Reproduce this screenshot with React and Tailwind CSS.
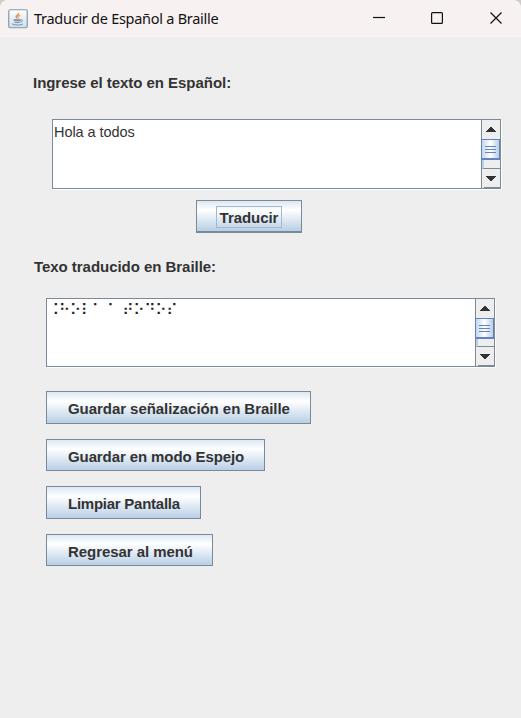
import React from "react";

function JavaIcon() {
  return (
    <svg width="20" height="20" viewBox="0 0 20 20" className="block">
      <defs>
        <linearGradient id="tile" x1="0" y1="0" x2="0" y2="1">
          <stop offset="0" stopColor="#ffffff" />
          <stop offset="1" stopColor="#d3dde6" />
        </linearGradient>
      </defs>
      <rect x="0.75" y="0.75" width="18.5" height="18" rx="1.5" fill="url(#tile)" stroke="#8299ad" strokeWidth="1.2" />
      <path d="M10.6 3.2C11 5.2 7 6 7.500 8c.2.9 1.2 1.300 1.500 2.200C9.700 8.500 8.800 8 10.200 6.800 11.300 5.900 11.700 4.800 10.600 3.200Z" fill="#ee8a3a" />
      <path d="M12.400 6.300C9.800 7 9.800 8.200 10.400 9.800" fill="none" stroke="#f0a465" strokeWidth="1.200" />
      <path d="M5.500 10.300h7.300c0 .8-.1 1.200-.3 1.700H5.800c-.2-.5-.3-1-.3-1.700ZM6.200 12.700h6c-.3.900-.7 1.300-1.200 1.300H7.500c-.6 0-1-.5-1.300-1.300Z" fill="#6f93b0" />
      <path d="M12.800 10.800c2.500-.7 2.200 1.900-.6 2.200M4 14.700c2 1.800 9.500 1.600 10.800.2" fill="none" stroke="#6f93b0" strokeWidth="1" />
    </svg>
  );
}

function TitleBar() {
  return (
    <header className="flex h-[37px] items-center bg-[#f7f1f1] pl-2">
      <JavaIcon />
      <h1 className="mb-[2px] ml-[6px] w-[200px] whitespace-nowrap font-['Noto_Sans',sans-serif] text-[14.5px] leading-5 tracking-[-0.27px] text-[#111]">
        Traducir de Español a Braille
      </h1>
      <svg className="ml-auto block" width="161" height="37" viewBox="360 0 161 37" fill="none" stroke="#111" strokeWidth="1.200">
        <path d="M373 17.500h12" />
        <rect x="431.600" y="12.600" width="10.800" height="10.800" rx="1" />
        <path d="M490.500 12.500l11 11M501.500 12.500l-11 11" />
      </svg>
    </header>
  );
}

function ArrowButton({ className, down }) {
  return (
    <div className={`flex shrink-0 items-center justify-center bg-[#eeeeee] pr-px ${className}`}>
      <svg width="10" height="5" viewBox="0 0 10 5" shapeRendering="crispEdges" className={down ? "mt-px block rotate-180" : "block"}>
        <path d="M4 0h2v1h1v1h1v1h1v1h1v1H0V4h1V3h1V2h1V1h1z" fill="#333" />
      </svg>
    </div>
  );
}

function ScrollBar() {
  return (
    <div className="flex w-[19px] shrink-0 flex-col border-l border-[#7a8a99] bg-[#eeeeee]">
      <ArrowButton className="h-[19px]" />
      <div className="-ml-px flex h-[21px] shrink-0 flex-col items-center justify-center gap-px border border-b-2 border-[#6382bf] bg-linear-to-r from-[#c3d8ec] via-white to-[#b8cfe5]">
        <i className="h-px w-[11px] bg-[#6382bf]" />
        <i className="mt-px h-px w-[11px] bg-[#6382bf]" />
        <i className="mt-px h-px w-[11px] bg-[#6382bf]" />
      </div>
      <div className="flex-1 border-b border-l-2 border-b-[#7a8a99] border-l-[#b8cfe5]" />
      <ArrowButton down className="h-[18px]" />
      <div className="ml-[2px] h-px bg-[#7a8a99]" />
    </div>
  );
}

function TextArea({ className, children }) {
  return (
    <div className={`flex w-[449px] border border-[#7a8a99] bg-white shadow-[1px_1px_0_#ffffff] ${className}`}>
      <div className="flex-1 overflow-hidden">{children}</div>
      <ScrollBar />
    </div>
  );
}

function Button({ className, children }) {
  return (
    <button
      className={`flex items-center border border-[#7a8a99] bg-linear-to-b from-[#dde8f3] via-white via-30% to-[#b8cfe5] text-[15px] leading-[18px] font-bold whitespace-nowrap text-[#333] ${className}`}
    >
      {children}
    </button>
  );
}

export default function App() {
  return (
    <div className="bg-[#cfcccc]">
      <div className="h-[718px] w-[521px] overflow-hidden rounded-t-lg bg-[#eeeeee] font-['Liberation_Sans',Arial,sans-serif] text-[15px] text-[#333]">
        <TitleBar />
        <main className="flex flex-col items-start">
          <h2 className="mt-[37px] ml-[33px] leading-[18px] font-bold tracking-[-0.04px]">Ingrese el texto en Español:</h2>
          <TextArea className="mt-[27px] ml-[52px] h-[70px]">
            <p className="mt-[3px] ml-px text-[14.5px] leading-[18px] tracking-[-0.05px]">Hola a todos</p>
          </TextArea>
          <Button className="mt-[11px] ml-[196px] h-[33px] w-[106px] justify-center border-b-2">
            <span className="mt-px flex h-[22px] w-[66px] items-center justify-center border border-[#a3b8cc] pt-[2px] tracking-[-0.05px]">
              Traducir
            </span>
          </Button>
          <h2 className="mt-[25px] ml-[34px] leading-[18px] font-bold tracking-[-0.04px]">Texo traducido en Braille:</h2>
          <TextArea className="mt-[22px] ml-[46px] h-[69px]">
            <p className="mt-[2px] ml-px font-['DejaVu_Sans',sans-serif] text-[15px] leading-[18px] whitespace-nowrap text-[#222] [word-spacing:-0.500px]">
              ⠨⠓⠕⠇⠁ ⠁ ⠞⠕⠙⠕⠎
            </p>
          </TextArea>
          <div className="mt-6 ml-[46px] flex flex-col items-start">
            <Button className="h-[33px] w-[265px] pt-[3px] pl-[21px] tracking-[-0.05px]">Guardar señalización en Braille</Button>
            <Button className="mt-[15px] h-8 w-[219px] pt-[3px] pl-[21px] tracking-[-0.1px]">Guardar en modo Espejo</Button>
            <Button className="mt-[15px] h-[33px] w-[155px] pt-[3px] pl-[21px] tracking-[-0.25px]">Limpiar Pantalla</Button>
            <Button className="mt-[15px] h-8 w-[167px] pt-[3px] pl-[21px] tracking-[-0.06px]">Regresar al menú</Button>
          </div>
        </main>
      </div>
    </div>
  );
}
